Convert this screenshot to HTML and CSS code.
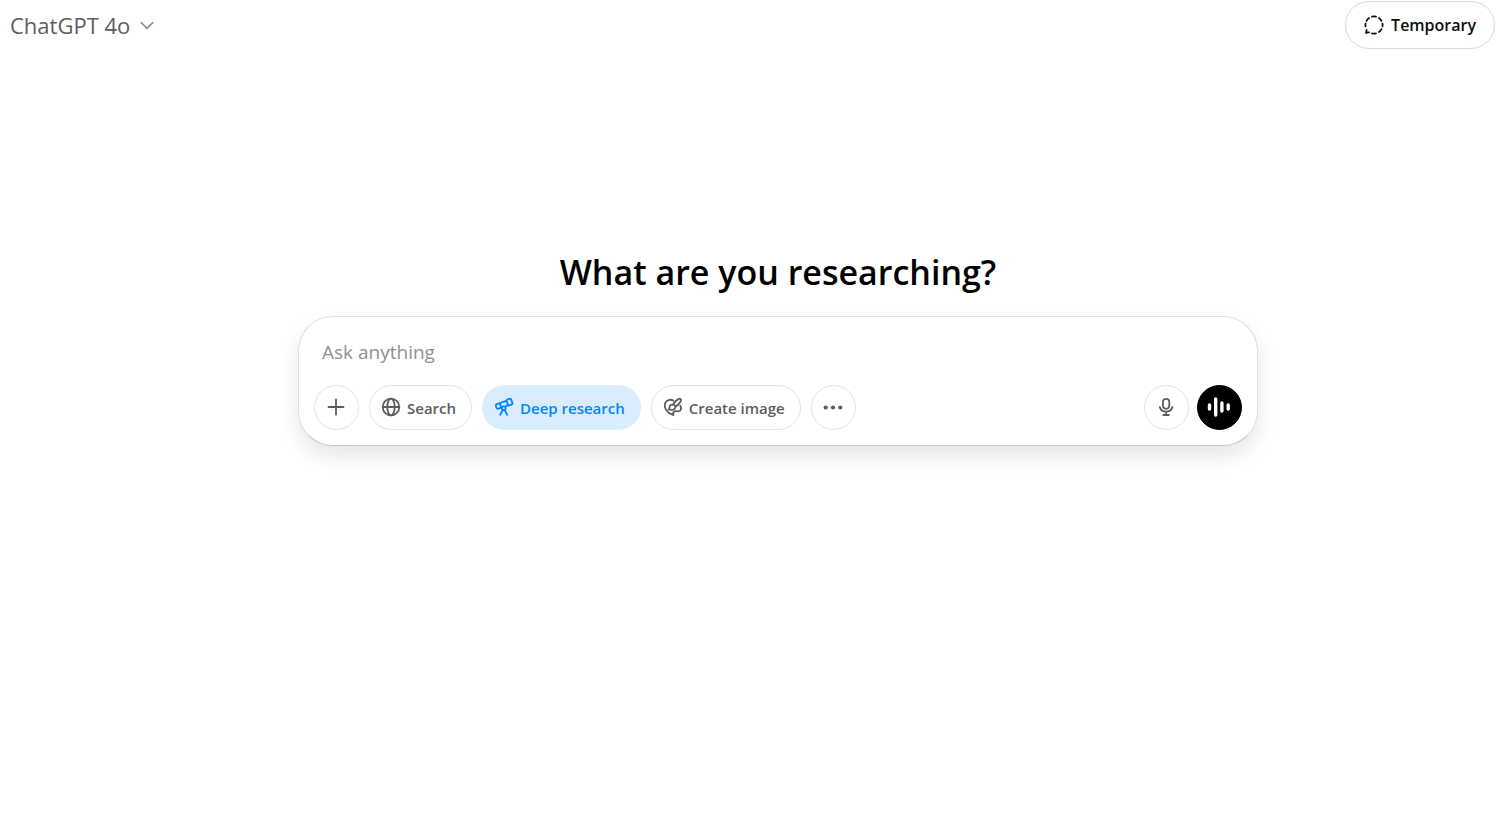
FILE: index.html
```html
<!DOCTYPE html>
<html lang="en">
<head>
<meta charset="utf-8">
<meta name="viewport" content="width=device-width, initial-scale=1">
<title>ChatGPT</title>
<link rel="stylesheet" href="styles.css">
</head>
<body>
<header class="topbar">
  <button class="model" type="button">
    <span>ChatGPT 4o</span>
    <svg class="chevron" viewBox="0 0 16 16" aria-hidden="true"><path d="M2.2 5.7 8 11.3l5.8-5.6"/></svg>
  </button>
  <button class="temporary" type="button">
    <svg class="icon-temp" viewBox="0 0 20 20" aria-hidden="true">
      <path d="M8 1.7q2-.5 4 0M14.9 3q1.7 1.1 2.6 2.9M18.5 8.6q.3 1.4 0 2.8M17.5 14.1q-.9 1.8-2.6 2.9M12 18.3q-2 .5-4 0M5.1 3q-1.7 1.1-2.6 2.9M1.5 8.6q-.3 1.4 0 2.8M2.7 15l-.7 2.9 3-.6"/>
    </svg>
    <span>Temporary</span>
  </button>
</header>
<main class="main">
  <h1 class="title">What are you researching?</h1>
  <form class="composer">
    <input class="prompt" type="text" placeholder="Ask anything" aria-label="Ask anything">
    <div class="tools">
      <div class="group">
        <button class="round" type="button" aria-label="Add">
          <svg class="icon" viewBox="0 0 21 21" aria-hidden="true"><path d="M10 2.5v15M2.5 10h15"/></svg>
        </button>
        <button class="pill" type="button">
          <svg class="icon" viewBox="0 0 21 21" aria-hidden="true"><circle cx="10" cy="10" r="8.3"/><ellipse cx="10" cy="10" rx="3.7" ry="8.3"/><path d="M1.7 10h16.6"/></svg>
          <span>Search</span>
        </button>
        <button class="pill active" type="button" aria-pressed="true">
          <svg class="icon" viewBox="0 0 21 21" aria-hidden="true">
            <path d="m13.1 2.7 2.5-.9q1.2-.4 1.6.8l1.2 3.5q.4 1.2-.8 1.6l-2 .7q-1.2.4-1.6-.8l-1.4-3.5q-.4-1 .5-1.4Z"/>
            <path d="M12.4 3.8 3 7.2q-1.6.6-1.1 2l.5 1.5q.5 1.4 2 .9l3.5-1.2M14.2 8.2l-2.7 1M5.8 6.4l1 2.7"/>
            <circle cx="9.7" cy="11.2" r="1.9"/>
            <path d="m8.7 13-2.5 4.8M10.7 13l2.5 4.8"/>
          </svg>
          <span>Deep research</span>
        </button>
        <button class="pill" type="button">
          <svg class="icon" viewBox="0 0 21 21" aria-hidden="true">
            <path d="M10.4 3.5C7.2 1.9 3.2 3 2 6.6.7 11 4 16.2 10 17.9"/>
            <path d="M10.1 7.7c1.4-2.7 3.2-4.9 5.8-5.9 1.4-.5 2.6.7 2 2-1.1 2.5-3 4.4-5.4 6"/>
            <path d="M10.1 7.7c-2-.5-3.5.6-3.5 2.5 0 1.1-.3 1.7-1 2.3 3.6 1 6.8.2 6.9-2.7-.1-1-1-1.9-2.4-2.1Z"/>
            <path d="M17.3 8.7c1.6 2.7.4 5.5-1.8 5.6-1.7.1-3.1-.7-4.4.4-1.1.9-1.2 2.3-.6 3.2"/>
          </svg>
          <span>Create image</span>
        </button>
        <button class="round" type="button" aria-label="More tools">
          <svg class="icon solid" viewBox="0 0 21 21" aria-hidden="true"><circle cx="2.7" cy="10.5" r="2.1"/><circle cx="10" cy="10.5" r="2.1"/><circle cx="17.3" cy="10.5" r="2.1"/></svg>
        </button>
      </div>
      <div class="group end">
        <button class="round" type="button" aria-label="Dictate">
          <svg class="icon" viewBox="0 0 21 21" aria-hidden="true"><rect x="6.9" y="1.8" width="6.4" height="10" rx="3.2"/><path d="M3.8 10c.7 2.7 3.2 4.6 6.3 4.6s5.6-1.9 6.3-4.6M10.1 14.6V18M7.3 18h5.6"/></svg>
        </button>
        <button class="round voice" type="button" aria-label="Voice mode">
          <svg class="icon-voice" viewBox="0 0 25 25" aria-hidden="true"><path d="M2.5 10v4M8.7 4v16M14.9 8v8M21.2 10v4"/></svg>
        </button>
      </div>
    </div>
  </form>
</main>
</body>
</html>
```
FILE: styles.css
```css
* { box-sizing: border-box; }

body {
  margin: 0;
  background: #fff;
  color: #0d0d0d;
  font-family: "Segoe UI", "Open Sans", "Noto Sans", sans-serif;
}

button, input { font: inherit; }

button {
  display: flex;
  align-items: center;
  justify-content: center;
  margin: 0;
  padding: 0;
  border: 0;
  background: none;
  color: inherit;
  cursor: pointer;
  white-space: nowrap;
}

svg {
  flex: none;
  fill: none;
  stroke: currentColor;
  stroke-linecap: round;
  stroke-linejoin: round;
}

.topbar {
  display: flex;
  align-items: center;
  justify-content: space-between;
  padding: 1px 3px 0 10px;
}

.model {
  gap: 9px;
  color: #5d5d5d;
  font-size: 22px;
  font-weight: 500;
}

.chevron {
  width: 16px;
  height: 16px;
  color: #8f8f8f;
  stroke-width: 1.6;
}

.temporary {
  gap: 7px;
  height: 48px;
  padding: 0 18px;
  border: 1px solid #d9d9d9;
  border-radius: 24px;
  font-size: 16px;
  font-weight: 600;
}

.icon-temp {
  width: 20px;
  height: 20px;
  stroke-width: 1.8;
}

.main {
  display: flex;
  flex-direction: column;
  align-items: center;
  padding: 199px 0 40px 58px;
}

.title {
  margin: 0 0 20px;
  color: #000;
  font-size: 34px;
  font-weight: 600;
  line-height: 48px;
}

.composer {
  width: 100%;
  max-width: 960px;
  padding: 15px;
  border: 1px solid #dedede;
  border-bottom-color: #c4c4c4;
  border-radius: 35px;
  background: #fff;
  box-shadow: 0 10px 20px rgba(0, 0, 0, 0.1);
}

.prompt {
  display: block;
  width: 100%;
  height: 40px;
  margin-bottom: 13px;
  padding: 0 8px;
  border: 0;
  outline: 0;
  background: transparent;
  color: #0d0d0d;
  font-size: 19px;
}

.prompt::placeholder { color: #8f8f8f; opacity: 1; }

.tools {
  display: flex;
  flex-wrap: wrap;
  justify-content: space-between;
  gap: 10px;
  color: #5d5d5d;
}

.group { display: flex; flex-wrap: wrap; gap: 10px; }
.end { gap: 8px; }

.round, .pill {
  height: 45px;
  border: 1px solid #e3e3e3;
  border-radius: 23px;
}

.round { width: 45px; }

.pill {
  gap: 5px;
  padding: 0 15px 0 11px;
  font-size: 15px;
  font-weight: 600;
}

.active {
  border-color: #daedff;
  background: #daedff;
  color: #0285ff;
}

.icon {
  width: 21px;
  height: 21px;
  stroke-width: 1.8;
}

.solid { fill: currentColor; stroke: none; }

.voice {
  border-color: #000;
  background: #000;
  color: #fff;
}

.icon-voice {
  width: 25px;
  height: 25px;
  stroke-width: 3.4;
}
```
